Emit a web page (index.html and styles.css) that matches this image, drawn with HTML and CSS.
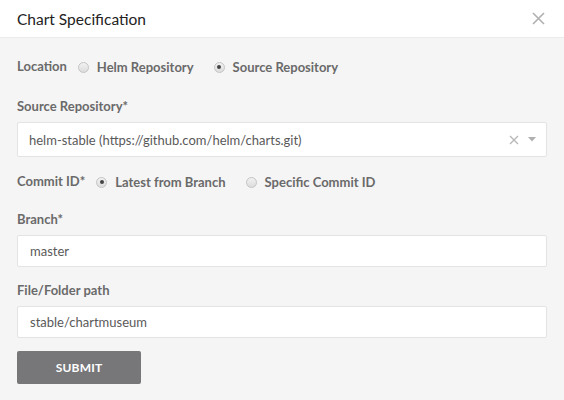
FILE: index.html
```html
<!DOCTYPE html>
<html>
<head>
<meta charset="utf-8">
<link rel="stylesheet" href="styles.css">
</head>
<body>
<div class="modal">
  <div class="modal-header">
    <h1 class="title">Chart Specification</h1>
    <svg class="close" width="13" height="13" viewBox="0 0 13 13"><path d="M1 1 L12 12 M12 1 L1 12" stroke="#b0b0b0" stroke-width="1.6" fill="none"/></svg>
  </div>
  <div class="modal-body">
    <div class="radio-row row-location">
      <span class="row-label">Location</span>
      <label class="option"><span class="radio"></span>Helm Repository</label>
      <label class="option"><span class="radio checked"></span>Source Repository</label>
    </div>

    <div class="field field-select">
      <div class="field-label">Source Repository*</div>
      <div class="select">
        <span class="select-value">helm-stable (https://github.com/helm/charts.git)</span>
        <svg class="clear" width="10" height="10" viewBox="0 0 10 10"><path d="M1 1 L9 9 M9 1 L1 9" stroke="#b8b8b8" stroke-width="1.4" fill="none"/></svg>
        <svg class="caret" width="8" height="5" viewBox="0 0 8 5"><path d="M0 0 L8 0 L4 4.5 Z" fill="#b0b0b0"/></svg>
      </div>
    </div>

    <div class="radio-row row-commit">
      <span class="row-label">Commit ID*</span>
      <label class="option"><span class="radio checked"></span>Latest from Branch</label>
      <label class="option"><span class="radio"></span>Specific Commit ID</label>
    </div>

    <div class="field field-branch">
      <div class="field-label">Branch*</div>
      <div class="input">master</div>
    </div>

    <div class="field field-path">
      <div class="field-label">File/Folder path</div>
      <div class="input">stable/chartmuseum</div>
    </div>

    <button class="submit">SUBMIT</button>
  </div>
</div>
</body>
</html>
```
FILE: styles.css
```css
html, body {
  margin: 0;
  padding: 0;
  background: #f5f5f5;
}
body {
  font-family: "Lato", "Open Sans", sans-serif;
  width: 564px;
  height: 400px;
  overflow: hidden;
}
.modal {
  display: flex;
  flex-direction: column;
  height: 400px;
}
.modal-header {
  height: 37px;
  background: #ffffff;
  border-bottom: 1px solid #ebebeb;
  display: flex;
  align-items: center;
  justify-content: space-between;
  padding: 0 19px 0 17px;
}
.title {
  margin: 0;
  font-size: 15.5px;
  font-weight: 400;
  color: #222;
}
.close {
  display: block;
}
.modal-body {
  padding: 19px 17px 0 17px;
  display: flex;
  flex-direction: column;
}
.radio-row {
  display: flex;
  align-items: center;
  height: 20px;
  font-size: 13px;
  color: #6a6a6a;
  font-weight: 700;
}
.row-label {
  margin-right: 11px;
  position: relative;
  top: -1px;
}
.option {
  display: flex;
  align-items: center;
  margin-right: 20px;
}
.radio {
  width: 11px;
  height: 11px;
  border-radius: 50%;
  border: 1px solid #c4c4c4;
  background: linear-gradient(#f2f2f2, #dcdcdc);
  margin-right: 8px;
  position: relative;
  box-sizing: border-box;
}
.radio.checked::after {
  content: "";
  position: absolute;
  left: 2.5px;
  top: 2.5px;
  width: 4px;
  height: 4px;
  border-radius: 50%;
  background: #444;
}
.field {
  display: flex;
  flex-direction: column;
}
.field-label {
  font-size: 13px;
  font-weight: 700;
  color: #6a6a6a;
  line-height: 20px;
  margin-bottom: 6px;
}
.field-select {
  margin-top: 19px;
}
.row-commit {
  margin-top: 15px;
}
.field-branch {
  margin-top: 17px;
}
.field-path {
  margin-top: 13px;
}
.select, .input {
  background: #fff;
  border: 1px solid #e3e3e3;
  border-radius: 2px;
  box-sizing: border-box;
  display: flex;
  align-items: center;
  font-size: 13px;
  color: #595959;
}
.select {
  height: 35px;
  padding: 0 10px 0 11px;
}
.select-value {
  flex: 1;
}
.clear {
  margin-right: 9px;
}
.input {
  height: 32px;
  padding: 0 12px;
}
.submit {
  margin-top: 13px;
  width: 124px;
  height: 33px;
  border: none;
  border-radius: 2px;
  background: #77777a;
  color: #fff;
  font-family: inherit;
  font-size: 12px;
  font-weight: 700;
  letter-spacing: 0.2px;
}
```
